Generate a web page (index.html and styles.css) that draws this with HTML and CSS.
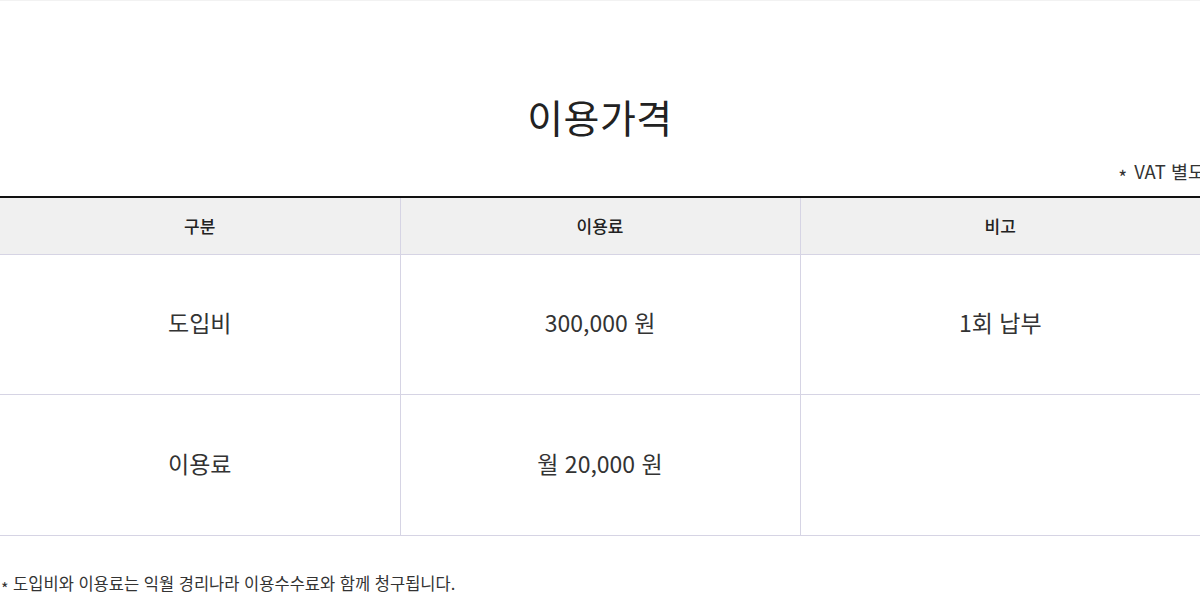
FILE: index.html
```html
<!DOCTYPE html>
<html lang="ko">
<head>
    <meta charset="UTF-8">
    <meta name="viewport" content="width=device-width, initial-scale=1.0">
    <title>이용가격</title>
    <link rel="stylesheet" href="styles.css">
</head>
<body>
    <div class="price-section">
        <h1 class="price-title">이용가격</h1>
        <p class="vat-note"><span class="star">*</span> VAT 별도</p>
        <table class="price-table">
            <thead>
                <tr>
                    <th>구분</th>
                    <th>이용료</th>
                    <th>비고</th>
                </tr>
            </thead>
            <tbody>
                <tr>
                    <td>도입비</td>
                    <td>300,000 원</td>
                    <td>1회 납부</td>
                </tr>
                <tr>
                    <td>이용료</td>
                    <td>월 20,000 원</td>
                    <td></td>
                </tr>
            </tbody>
        </table>
        <p class="footnote"><span class="star">*</span> 도입비와 이용료는 익월 경리나라 이용수수료와 함께 청구됩니다.</p>
    </div>
</body>
</html>
```

FILE: styles.css
```css
:root {
    --text-color: #222222;
    --text-body: #333333;
    --line-color: #d6d4e4;
    --head-bg: #f0f0f0;
}

* {
    margin: 0;
    padding: 0;
    box-sizing: border-box;
}

html, body {
    overflow: hidden;
}

body {
    font-family: "Noto Sans CJK KR", "Noto Sans", sans-serif;
    color: var(--text-color);
    background-color: #ffffff;
    border-top: 1px solid #f2f2f2;
}

.price-section {
    width: 1200px;
    padding-top: 91px;
}

.price-title {
    font-size: 39px;
    font-weight: 400;
    line-height: 48px;
    text-align: center;
    letter-spacing: 0.5px;
}

.vat-note {
    margin-top: 19px;
    margin-right: -5px;
    font-size: 18.5px;
    line-height: 24px;
    text-align: right;
    white-space: nowrap;
    color: var(--text-body);
}

.star {
    display: inline-block;
    font-size: 19px;
    vertical-align: -6px;
    margin-right: 2px;
}

.price-table {
    margin-top: 7px;
    width: 1200px;
    border-collapse: collapse;
    table-layout: fixed;
    border-top: 2px solid #111111;
}

.price-table th,
.price-table td {
    width: 400px;
    text-align: center;
    border-bottom: 1px solid var(--line-color);
    border-left: 1px solid var(--line-color);
}

.price-table th:first-child,
.price-table td:first-child {
    border-left: none;
}

.price-table th {
    height: 57px;
    background-color: var(--head-bg);
    font-size: 17px;
    font-weight: 500;
    color: var(--text-color);
}

.price-table td {
    height: 140px;
    padding-bottom: 4px;
    font-size: 23px;
    font-weight: 400;
    color: var(--text-body);
}

.price-table tbody tr:last-child td {
    height: 141px;
}

.footnote {
    margin-top: 35px;
    font-size: 16.5px;
    line-height: 24px;
    color: var(--text-body);
    white-space: nowrap;
}

.footnote .star {
    font-size: 16px;
    vertical-align: -5px;
    margin-left: 1px;
    margin-right: 0;
}
```
